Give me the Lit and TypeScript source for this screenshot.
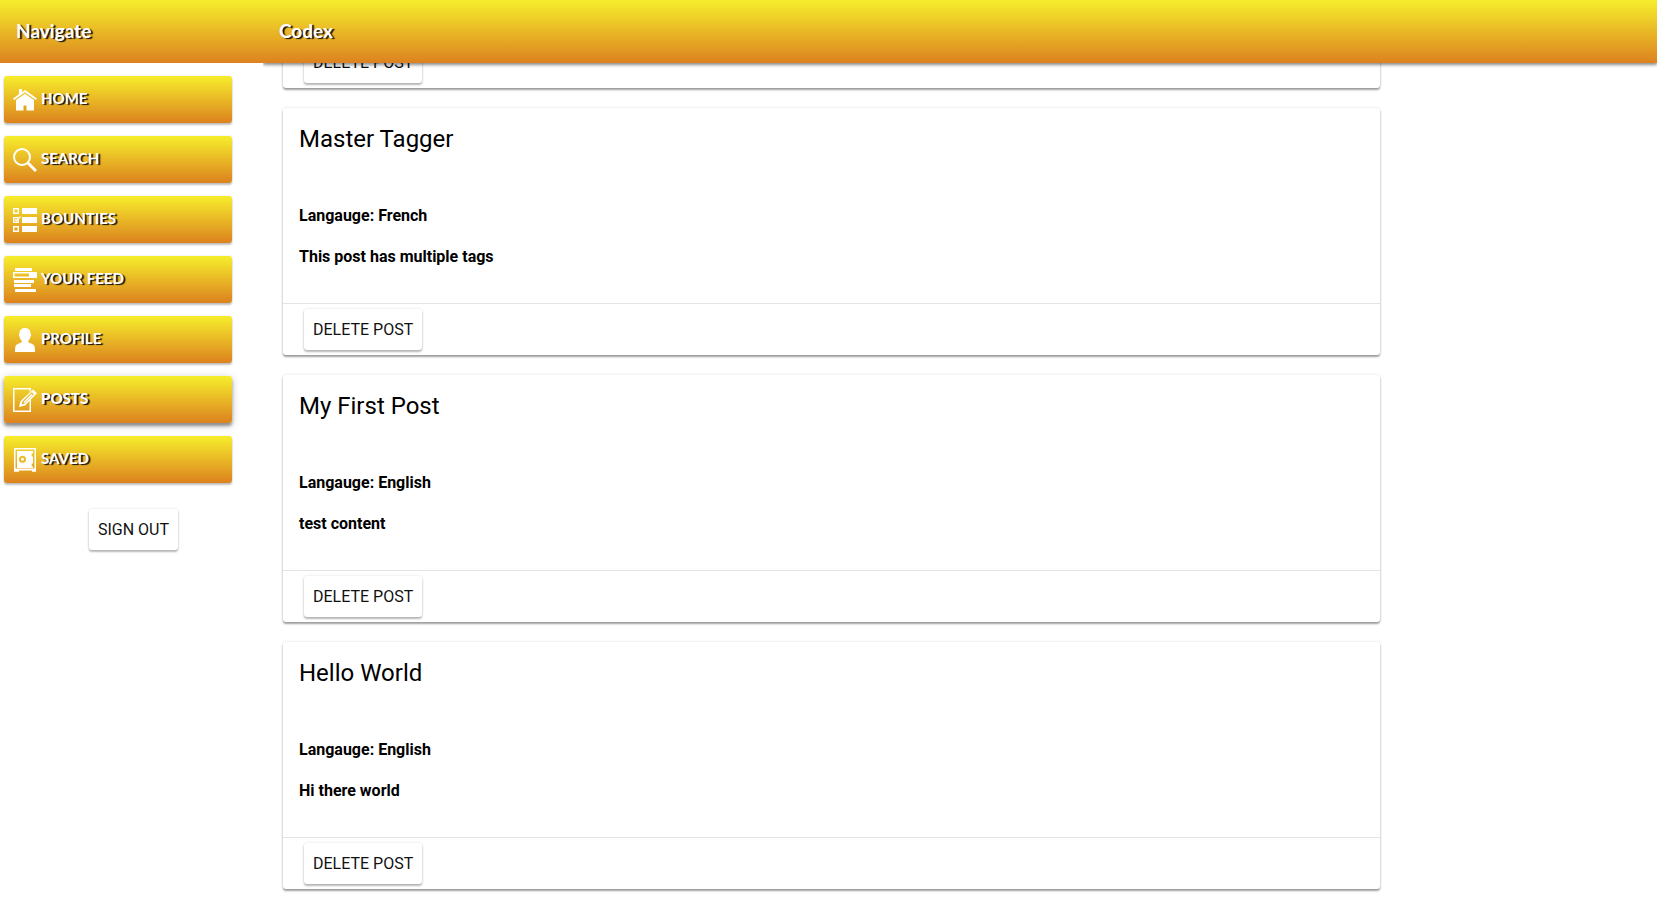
import { LitElement, html, css, svg, nothing } from "lit";
import { customElement, property, query } from "lit/decorators.js";

const icons: Record<string, unknown> = {
  home: svg`<path d="M6 1h3v3.2L12 2l12 8.5-1.2 1.4L12 4.3 1.2 11.9 0 10.5 6 6.2z"/><path d="M12 5.7 21 12v10.5h-7.5v-5h-3v5H3V12z"/>`,
  search: svg`<path fill="none" stroke="#fff" stroke-width="2" d="M9 1a8 8 0 1 1 0 16A8 8 0 1 1 9 1z"/><path fill="none" stroke="#fff" stroke-width="3" d="m14.5 14.500 8.500 8.500"/>`,
  bounties: svg`<path d="M9 0h15v6H9zM9 9h15v6H9zM9 18h15v6H9z"/><path fill-rule="evenodd" d="M0 0h6v6H0zM1.500 1.500v3h3v-3zM0 18h6v6H0zM1.500 19.500v3h3v-3z"/><path fill="none" stroke="#fff" stroke-width="1.300" d="M5.300 11.500v2.800H.700V9.700H5M1.800 11.500l1.500 1.300L7.500 8.500"/>`,
  feed: svg`<path d="M2 0h17v3H2zM1 12h20v3H1zM1 16h17v3H1zM2 21h21v3H2z"/><path fill-rule="evenodd" d="M0 4h24v6H0zM1.500 5.500v3H16v-3z"/>`,
  profile: svg`<path d="M12 0c3.800 0 5.700 2.500 5.600 6 .8.500.6 2.300-.3 2.900-.4 1.800-1 2.900-2 3.700v1.500c1.500 1.500 5.500 1.700 6.300 4.400.3 1.500.4 3.500.4 5.500H2c0-2 .1-4 .4-5.500.8-2.700 4.800-2.900 6.300-4.400v-1.500c-1-.8-1.600-1.900-2-3.700-.9-.6-1.100-2.400-.3-2.900C6.300 2.500 8.200 0 12 0z"/>`,
  posts: svg`<path d="M0 0h18v2.500L16.500 4V1.500h-15v21h15V13l1.500-1.500V24H0z"/><path fill-rule="evenodd" d="m20 1.500 4 3.800L12 17.500 6 19l1.600-6zm-1.200 2.600-9.300 9.400-.8 3 2.600-.8 9.500-9.500z"/><path d="m18.500 6 1 1-8 8-1-1z"/>`,
  saved: svg`<path fill-rule="evenodd" d="M1 0h22v23.800h-4V22.500H6v1.300H1zM2.500 1.500v19h19v-19z"/><path fill-rule="evenodd" d="M4 3h16v2.500h-1.300v3H20v7h-1.300v3H20V20H4zM9.500 7.700a3.500 3.500 0 1 0 0 7 3.500 3.500 0 1 0 0-7zm0 2a1.500 1.500 0 1 1 0 3 1.500 1.500 0 1 1 0-3z"/>`,
};

@customElement("nav-item")
export class NavItem extends LitElement {
  @property() icon = "home";
  @property() label = "";
  @property({ type: Boolean }) active = false;

  static styles = css`
    :host { display: block; }
    .item {
      display: flex;
      align-items: center;
      gap: 4px;
      width: 100%;
      height: 47px;
      padding: 0 9px;
      border: 0;
      border-radius: 3px;
      background: linear-gradient(#f6ee2c, #dc821f);
      box-shadow: 0 2px 2px rgba(0, 0, 0, 0.24), 0 0 2px rgba(0, 0, 0, 0.12);
      color: #fff;
      font: 700 15px/20px Lato, sans-serif;
      text-transform: uppercase;
      text-shadow: 2px 1px 1px #111;
      cursor: pointer;
      box-sizing: border-box;
    }
    .active {
      font-weight: 900;
      box-shadow: 0 3px 3px rgba(0, 0, 0, 0.34), 0 2px 8px rgba(0, 0, 0, 0.24);
    }
    .icon { flex: none; fill: #fff; }
    .label { padding-bottom: 3px; }
  `;

  render() {
    return html`<button
      class="item ${this.active ? "active" : ""}"
      type="button"
      aria-current=${this.active ? "page" : nothing}
    >
      <svg class="icon" width="24" height="24" viewBox="0 0 24 24" aria-hidden="true">${icons[this.icon]}</svg>
      <span class="label">${this.label}</span>
    </button>`;
  }
}

@customElement("raised-button")
export class RaisedButton extends LitElement {
  static styles = css`
    :host { display: inline-flex; }
    .button {
      height: 41px;
      padding: 0 9px;
      border: 0;
      border-radius: 3px;
      background: #fff;
      box-shadow: 0 2px 2px rgba(0, 0, 0, 0.26), 0 0 3px rgba(0, 0, 0, 0.12);
      color: #111;
      font: 400 16px/20px Roboto, sans-serif;
      text-transform: uppercase;
      white-space: nowrap;
      cursor: pointer;
    }
  `;
  render() {
    return html`<button class="button" type="button"><slot></slot></button>`;
  }
}

@customElement("post-card")
export class PostCard extends LitElement {
  @property() heading = "";
  @property() language = "";
  @property() content = "";

  static styles = css`
    :host {
      display: block;
      border-radius: 3px;
      background: #fff;
      box-shadow: 0 2px 2px rgba(0, 0, 0, 0.36), 0 0 3px rgba(0, 0, 0, 0.12);
    }
    .body { min-height: 195px; padding: 15px 16px 0; box-sizing: border-box; }
    .title { margin: 0 0 51px; font-size: 24px; line-height: 32px; font-weight: 400; }
    .text { margin: 0 0 22px; font-size: 16px; line-height: 19px; font-weight: 700; }
    .footer { display: flex; padding: 5px 21px; border-top: 1px solid #e4e4e4; }
  `;

  render() {
    return html`
      <div class="body">
        ${this.heading
          ? html`<h2 class="title">${this.heading}</h2>
              <h4 class="text">Langauge: ${this.language}</h4>
              <h4 class="text">${this.content}</h4>`
          : nothing}
      </div>
      <div class="footer"><raised-button>Delete Post</raised-button></div>
    `;
  }
}

@customElement("app-root")
export class AppRoot extends LitElement {
  @query(".content") private scroller!: HTMLElement;

  private nav = [
    ["home", "Home"],
    ["search", "Search"],
    ["bounties", "Bounties"],
    ["feed", "Your Feed"],
    ["profile", "Profile"],
    ["posts", "Posts"],
    ["saved", "Saved"],
  ];

  private posts = [
    { heading: "", language: "", content: "" },
    { heading: "Master Tagger", language: "French", content: "This post has multiple tags" },
    { heading: "My First Post", language: "English", content: "test content" },
    { heading: "Hello World", language: "English", content: "Hi there world" },
  ];

  static styles = css`
    :host {
      display: grid;
      grid-template-columns: 263px minmax(0, 1fr);
      height: 100vh;
      overflow: hidden;
      background: #fff;
      color: #000;
      font-family: Roboto, sans-serif;
    }
    .drawer, .main { display: flex; flex-direction: column; min-height: 0; }
    .bar {
      flex: none;
      display: flex;
      align-items: center;
      height: 63px;
      padding: 0 16px 2px;
      box-sizing: border-box;
      background: linear-gradient(#f6ee2c, #dc821f);
      color: #fff;
    }
    .bar-title {
      margin: 0;
      font: 700 19px/24px Lato, sans-serif;
      text-shadow: 2px 1px 1px #111;
    }
    .main { overflow: hidden; }
    .main .bar { z-index: 1; box-shadow: 0 2px 3px rgba(0, 0, 0, 0.45); }
    .nav { display: flex; flex-direction: column; gap: 13px; padding: 13px 31px 0 4px; }
    .sign-out { display: flex; justify-content: center; padding: 26px 0; margin-right: -4px; }
    .content { flex: 1; min-height: 0; padding: 0 20px; overflow-y: auto; scrollbar-width: none; }
    .list { display: grid; gap: 20px; width: 81%; box-sizing: border-box; padding: 20px 0 25px; }
  `;

  firstUpdated() {
    const toEnd = () => (this.scroller.scrollTop = this.scroller.scrollHeight);
    new ResizeObserver(toEnd).observe(this.scroller.firstElementChild!);
    toEnd();
  }

  render() {
    return html`
      <aside class="drawer">
        <header class="bar"><h1 class="bar-title">Navigate</h1></header>
        <nav class="nav">
          ${this.nav.map(
            ([icon, label]) =>
              html`<nav-item icon=${icon} label=${label} ?active=${icon === "posts"}></nav-item>`
          )}
        </nav>
        <div class="sign-out"><raised-button>Sign Out</raised-button></div>
      </aside>
      <main class="main">
        <header class="bar"><h1 class="bar-title">Codex</h1></header>
        <div class="content">
          <div class="list">
            ${this.posts.map(
              (p) =>
                html`<post-card heading=${p.heading} language=${p.language} content=${p.content}></post-card>`
            )}
          </div>
        </div>
      </main>
    `;
  }
}
